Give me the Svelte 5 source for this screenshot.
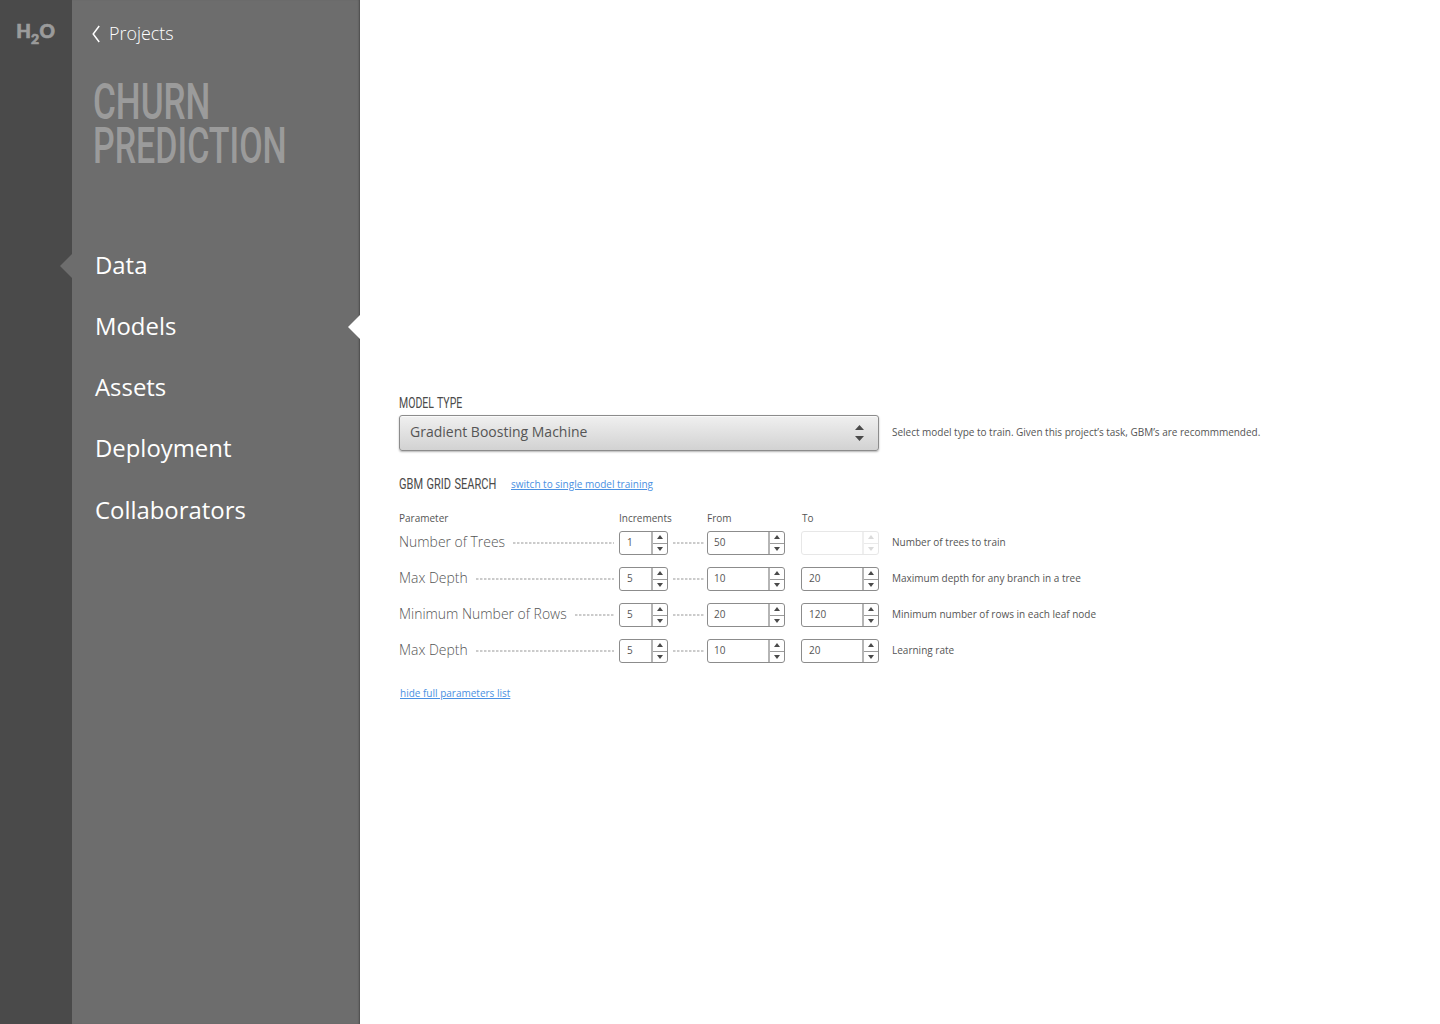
<script>
  const nav = ['Data', 'Models', 'Assets', 'Deployment', 'Collaborators'];

  const params = [
    { name: 'Number of Trees', inc: '1', from: '50', to: '', help: 'Number of trees to train' },
    { name: 'Max Depth', inc: '5', from: '10', to: '20', help: 'Maximum depth for any branch in a tree' },
    { name: 'Minimum Number of Rows', inc: '5', from: '20', to: '120', help: 'Minimum number of rows in each leaf node' },
    { name: 'Max Depth', inc: '5', from: '10', to: '20', help: 'Learning rate' }
  ];
</script>

{#snippet stepper(value, disabled)}
  <div class="stepper" class:disabled>
    <span class="value">{value}</span>
    <span class="arrows">
      <span class="arrow"><svg width="6" height="4" viewBox="0 0 6 4"><path d="M0 4L3 0L6 4Z" /></svg></span>
      <span class="arrow"><svg width="6" height="4" viewBox="0 0 6 4"><path d="M0 0L3 4L6 0Z" /></svg></span>
    </span>
  </div>
{/snippet}

<div class="app">
  <aside class="rail">
    <svg class="logo" width="40" height="26" viewBox="0 0 40 26">
      <text x="0.3" y="17" font-size="19">H</text>
      <text x="15" y="23.2" font-size="14">2</text>
      <text x="23.6" y="17" font-size="19">O</text>
    </svg>
  </aside>

  <aside class="sidebar">
    <a class="back" href="#projects">
      <svg width="9" height="18" viewBox="0 0 9 18"><path d="M7.2 1L1.2 9L7.2 17" /></svg>
      <span>Projects</span>
    </a>
    <h1>
      <span class="churn">CHURN</span>
      <span class="prediction">PREDICTION</span>
    </h1>
    <nav>
      {#each nav as item}
        <a href="#{item}" class:origin={item === 'Data'} class:current={item === 'Models'}>{item}</a>
      {/each}
    </nav>
  </aside>

  <main>
    <h2><span class="type">MODEL TYPE</span></h2>
    <div class="model">
      <div class="select">
        <span>Gradient Boosting Machine</span>
        <svg width="9" height="16" viewBox="0 0 9 16"><path d="M0 5L4.5 0L9 5ZM0 11L4.5 16L9 11Z" /></svg>
      </div>
      <p class="help wide">Select model type to train. Given this project’s task, GBM’s are recommmended.</p>
    </div>

    <div class="search">
      <h2><span class="grid">GBM GRID SEARCH</span></h2>
      <a class="link" href="#single">switch to single model training</a>
    </div>

    <div class="row heads">
      <span>Parameter</span><span>Increments</span><span></span><span>From</span><span class="to">To</span>
    </div>
    {#each params as p}
      <div class="row">
        <div class="name"><span>{p.name}</span><i class="dots"></i></div>
        {@render stepper(p.inc, false)}
        <i class="dots short"></i>
        {@render stepper(p.from, false)}
        <div class="to">{@render stepper(p.to, !p.to)}</div>
        <p class="help">{p.help}</p>
      </div>
    {/each}
    <a class="link hide" href="#hide">hide full parameters list</a>
  </main>
</div>

<style>
  :global(body) { background: #fff; overflow: hidden; }
  .app {
    display: flex;
    height: 1024px;
    font-family: 'Open Sans', 'Noto Sans', sans-serif;
    color: #555;
  }
  h1, h2, p { margin: 0; font-weight: 400; }
  svg { display: block; overflow: visible; }
  a { color: inherit; text-decoration: none; }

  .rail { box-sizing: border-box; width: 72px; padding: 21px 0 0 16px; background: #4a4a4a; }
  .logo { fill: #9b9b9b; stroke: #9b9b9b; stroke-width: 0.7; font-family: Lato, sans-serif; font-weight: 900; }

  .sidebar {
    box-sizing: border-box;
    width: 288px;
    padding: 19px 0 0 20px;
    background: #6d6d6d;
    box-shadow: inset -2px 0 2px -1px rgba(0, 0, 0, 0.32);
    color: #fff;
  }
  .back { display: flex; align-items: center; gap: 8px; height: 27px; font-size: 17.9px; font-weight: 300; }
  .back svg { fill: none; stroke: #fff; stroke-width: 1.5; margin-top: 2px; }

  /* condensed headings: regular letters narrowed horizontally */
  h1 { margin: 34px 0 0 1px; height: 90px; font: 500 50px/44px Roboto, sans-serif; color: #9b9b9b; }
  h1 span, h2 span { display: block; width: max-content; transform-origin: 0 50%; white-space: nowrap; }
  .churn { transform: scaleX(0.7); }
  .prediction { transform: scaleX(0.68); }
  h2 { height: 16px; font: 400 15px/16px Roboto, sans-serif; color: #4a4a4a; word-spacing: 1px; }
  .type { transform: scaleX(0.7); }
  .grid { transform: scaleX(0.735); }

  nav { display: flex; flex-direction: column; margin-top: 65px; }
  nav a { position: relative; height: 61px; line-height: 59px; padding-left: 3px; font-size: 23.9px; }
  nav a:last-child { padding-top: 1px; }
  nav a::before { position: absolute; top: 18.7px; border: 12px solid transparent; border-left: 0; }
  .origin::before { content: ''; left: -32px; border-right-color: #6d6d6d; }
  .current::before { content: ''; right: 0; border-right-color: #fff; }

  main { flex: 1; padding: 395px 0 0 39px; }
  .model { display: flex; align-items: center; gap: 13px; margin-top: 4px; }
  .select {
    box-sizing: border-box;
    display: flex;
    align-items: center;
    justify-content: space-between;
    width: 480px;
    height: 36px;
    padding: 0 14px 0 10px;
    border: 1px solid #8c8c8c;
    border-radius: 3px;
    background: linear-gradient(#f0f0f0, #d2d2d2);
    box-shadow: 0 1px 2px rgba(0, 0, 0, 0.3), inset 0 1px 0 #fafafa;
    font-size: 14px;
  }
  .select span { margin-top: -4px; }
  .select svg { fill: #4a4a4a; }
  .help { font-size: 10px; line-height: 14px; white-space: nowrap; }
  .wide { margin-top: -2px; letter-spacing: -0.015px; }
  .search { display: flex; align-items: center; margin-top: 25px; }
  .search h2 { width: 112px; }
  .link { font-size: 10px; line-height: 14px; color: #4a90e2; text-decoration: underline; }

  .row { display: grid; grid-template-columns: 220px 49px 39px 78px 94px auto; height: 36px; align-items: start; }
  .row .help { margin: 4px 0 0 13px; }
  .heads { height: 20px; margin-top: 19px; font-size: 10px; line-height: 14px; }
  .heads .to { padding-left: 17px; }
  .row > div.to { padding-left: 16px; }
  .name { display: flex; align-items: center; gap: 8px; height: 22px; padding-right: 5px; font-size: 13.95px; font-weight: 300; white-space: nowrap; }
  .name span { margin-top: -2px; }
  .dots {
    flex: 1;
    height: 2px;
    margin-top: 2px;
    background: repeating-linear-gradient(90deg, #cbcbcb 0 2px, #e6e6e6 2px 3px, transparent 3px 4px);
  }
  .dots.short { margin: 11px 3px 0 5px; }
  .stepper {
    box-sizing: border-box;
    display: flex;
    height: 24px;
    border: 1px solid #8c8c8c;
    border-radius: 3px;
    font-size: 10px;
    line-height: 21px;
  }
  .value { flex: 1; padding-left: 7px; }
  .row > .stepper:nth-child(4) .value { padding-left: 6px; }
  .arrows { display: flex; flex-direction: column; width: 14px; border-left: 2px solid #b5b5b5; }
  .arrow { flex: 1; display: flex; align-items: center; justify-content: center; }
  .arrow + .arrow { border-top: 1px solid #9b9b9b; }
  .arrow svg { fill: #4a4a4a; }
  .disabled { opacity: 0.2; }
  .hide { display: block; margin: 11px 0 0 1px; width: max-content; }
</style>
